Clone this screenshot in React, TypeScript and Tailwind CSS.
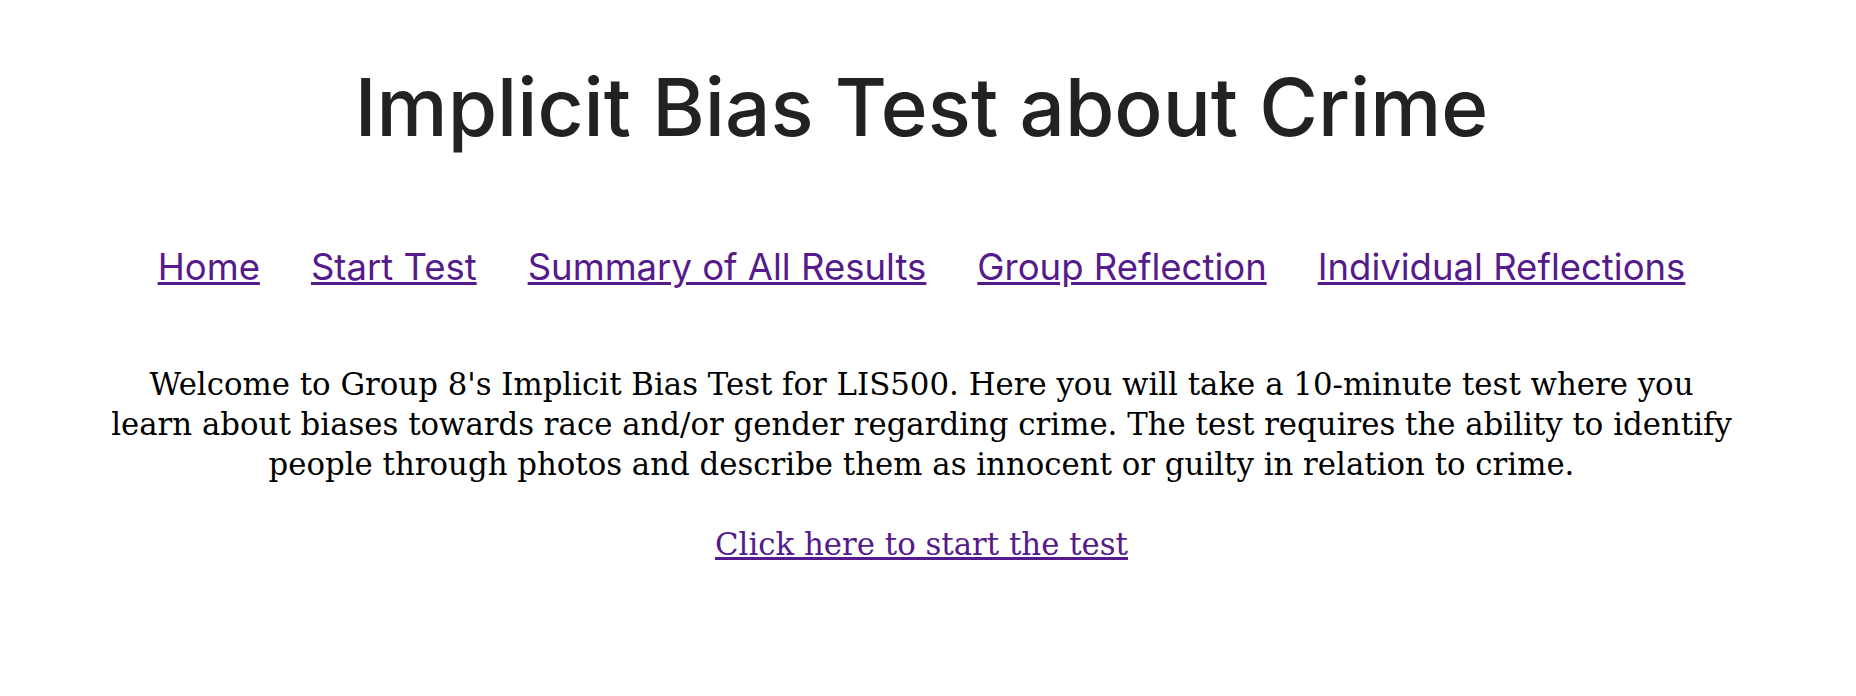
import React from "react";

export default function App() {
  const links = [
    "Home",
    "Start Test",
    "Summary of All Results",
    "Group Reflection",
    "Individual Reflections",
  ];
  return (
    <div className="min-h-[696px] w-full bg-white pr-[13px]">
      <div className="flex flex-col items-center text-center">
        <h1
          className="mt-[59px] text-[80px] font-medium leading-[96px] text-[#222222]"
          style={{ fontFamily: "Inter, 'Noto Sans', sans-serif" }}
        >
          Implicit Bias Test about Crime
        </h1>
        <nav
          className="mt-[88px] flex justify-center gap-[51px] text-[36.5px] leading-[48px]"
          style={{ fontFamily: "Inter, 'Noto Sans', sans-serif" }}
        >
          {links.map((l) => (
            <a key={l} href="#" className="text-[#551a8b] underline">
              {l}
            </a>
          ))}
        </nav>
        <div
          className="mt-[73px] text-[30.8px] leading-[40px] text-black"
          style={{ fontFamily: "'DejaVu Serif', 'Liberation Serif', serif" }}
        >
          <p>
            Welcome to Group 8's Implicit Bias Test for LIS500. Here you will take a 10-minute test where you
            <br />
            learn about biases towards race and/or gender regarding crime. The test requires the ability to identify
            <br />
            people through photos and describe them as innocent or guilty in relation to crime.
          </p>
          <p className="mt-[40px]">
            <a href="#" className="text-[#551a8b] underline">
              Click here to start the test
            </a>
          </p>
        </div>
      </div>
    </div>
  );
}
